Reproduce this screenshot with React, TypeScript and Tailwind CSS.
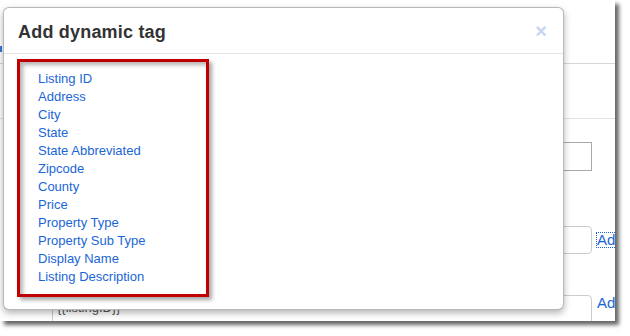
const tags = [
  'Listing ID',
  'Address',
  'City',
  'State',
  'State Abbreviated',
  'Zipcode',
  'County',
  'Price',
  'Property Type',
  'Property Sub Type',
  'Display Name',
  'Listing Description',
];

const BackgroundPage = () => (
  <div className="flex flex-col">
    <div className="pt-[46px]">
      <div className="h-[6px] w-[2px] bg-[#3a78dc]" />
    </div>
    <div className="mt-[11px] border-t border-[#d6d6d6]" />
    <div className="mt-[54px] border-t border-[#e2e2e2]" />

    <div className="ml-[52px] mt-[23px] h-[29px] w-[540px] border border-[#a9a9a9] bg-white" />

    <div className="mt-[55px] flex items-center">
      <div className="ml-[52px] h-[28px] w-[540px] shrink-0 rounded-[4px] border border-[#cccccc] bg-white" />
      <span className="ml-[5px] shrink-0 text-[15px] leading-[14px] text-[#1a66d6] outline-1 outline-dotted outline-[#1a66d6]">
        Add
      </span>
    </div>

    <div className="mt-[41px] flex items-start">
      <div className="ml-[52px] h-[60px] w-[540px] shrink-0 rounded-[4px] border border-[#cccccc] bg-white px-[4px] pt-[4px] text-[13px] leading-[16px] text-[#555]">
        {'{{listingID}}'}
      </div>
      <span className="ml-[5px] mt-[1px] shrink-0 text-[15px] leading-[14px] text-[#1a66d6]">Add</span>
    </div>
  </div>
);

const DynamicTagModal = () => (
  <div className="absolute left-[3px] top-[7px] flex h-[303px] w-[561px] flex-col rounded-[6px] border border-[rgba(0,0,0,0.28)] bg-white shadow-[0_3px_7px_rgba(0,0,0,0.3)]">
    <div className="flex h-[46px] items-center justify-between border-b border-[#e5e5e5] pl-[14px] pr-[16px]">
      <h3 className="pt-[2px] text-[18px] font-bold leading-[20px] tracking-[0.2px] text-[#333]">Add dynamic tag</h3>
      <span className="text-[20px] font-bold leading-none text-[#c6d6ef]">×</span>
    </div>

    <div className="ml-[13px] mt-[5px] h-[238px] w-[192px] border-[3px] border-[#c00000] pl-[18px] pt-[8px] shadow-[3px_3px_4px_rgba(0,0,0,0.35),inset_3px_3px_4px_rgba(0,0,0,0.3)]">
      <ul className="flex flex-col">
        {tags.map((tag) => (
          <li key={tag} className="text-[13px] leading-[18px] text-[#1a66d6]">
            {tag}
          </li>
        ))}
      </ul>
    </div>
  </div>
);

const App = () => {
  return (
    <div className="h-[336px] w-[630px] overflow-hidden bg-white font-['Liberation_Sans',Arial,sans-serif]">
      <div className="relative h-[321px] w-[615px] overflow-hidden bg-white shadow-[4px_4px_4px_rgba(0,0,0,0.6)]">
        <BackgroundPage />
        <DynamicTagModal />
      </div>
    </div>
  );
};

export default App;
